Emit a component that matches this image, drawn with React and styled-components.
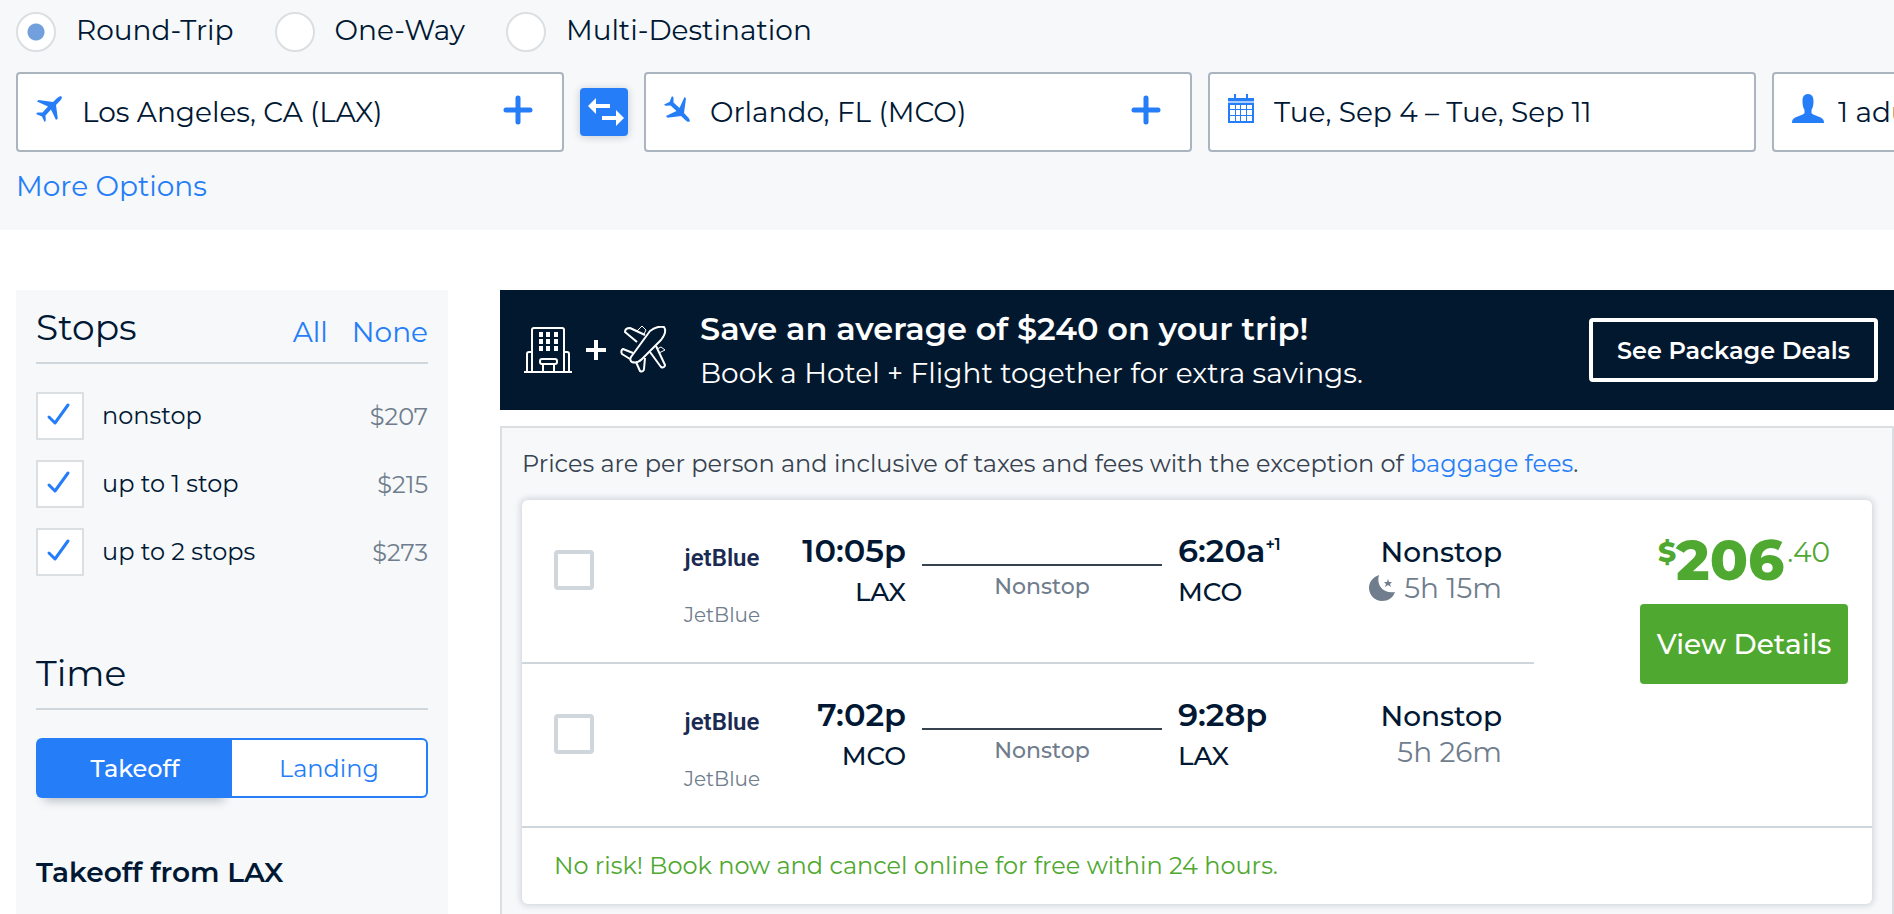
import React, { useState } from "react"
import styled, { createGlobalStyle, css } from "styled-components"

const navy = "#001833"
const blue = "#257ef8"
const green = "#4fa830"
const slate = "#6f7d8c"
const mist = "#f6f8fa"
const rule = "#cfd6dc"

const stops = [
  { id: "stops-0", label: "nonstop", price: "$207" },
  { id: "stops-1", label: "up to 1 stop", price: "$215" },
  { id: "stops-2", label: "up to 2 stops", price: "$273" },
]

const legs = [
  {
    id: "out",
    depart: "10:05p",
    from: "LAX",
    arrive: "6:20a",
    plus: "+1",
    to: "MCO",
    duration: "5h 15m",
    overnight: true,
  },
  {
    id: "back",
    depart: "7:02p",
    from: "MCO",
    arrive: "9:28p",
    to: "LAX",
    duration: "5h 26m",
  },
]

const Plane = ({ landing }) => (
  <PlaneSvg $landing={landing} viewBox="0 0 26 26" aria-hidden="true">
    <path
      fill="currentColor"
      d="M25.500.500c.8 1 0 2.500-1 3.700L20 9l1.800 13.500-1.800 1.500-5-10.500-5.500 6 .3 5-1.300 1.500L6 20.500 0 18l1.500-1.500h5l5.500-6L1 5.500 2.500 4 17 6l4.500-4.200C23 .5 24.700-.3 25.500.5z"
    />
  </PlaneSvg>
)

const Plus = () => (
  <PlusSvg viewBox="0 0 30 30" aria-hidden="true">
    <path d="M15 3v24M3 15h24" />
  </PlusSvg>
)

const Swap = () => (
  <svg width="36" height="30" viewBox="0 0 36 30" fill="#fff" aria-hidden="true">
    <path d="M0 9 8 1v6h14v4H8v6zM36 21l-8 8v-6H14v-4h14v-6z" />
  </svg>
)

const Calendar = () => (
  <svg width="26" height="30" viewBox="0 0 26 30" fill={blue} aria-hidden="true">
    <path d="M6 0h2v5H6zM18 0h2v5h-2zM0 4h26v3H0zM0 9h26v2H0z" />
    <path d="M0 7h26v2H0z" opacity=".4" />
    <path
      fillRule="evenodd"
      d="M0 10h26v19H0zM2 11v4h5v-4zM8 11v4h4v-4zM13 11v4h5v-4zM19 11v4h5v-4zM2 16v5h5v-5zM8 16v5h4v-5zM13 16v5h5v-5zM19 16v5h5v-5zM2 22v5h5v-5zM8 22v5h4v-5zM13 22v5h5v-5zM19 22v5h5v-5z"
    />
  </svg>
)

const Person = () => (
  <svg width="32" height="30" viewBox="0 0 32 30" fill={blue} aria-hidden="true">
    <path d="M16 0c4 0 5.500 3 5.500 7 0 4-.5 6-2 9v3c1 3 12.500 3 12.500 9v1H0v-1c0-6 11.500-6 12.500-9v-3c-1.500-3-2-5-2-9 0-4 1.500-7 5.500-7z" />
  </svg>
)

const Hotel = () => (
  <svg width="48" height="48" viewBox="0 0 48 48" fill="none" stroke="#fff" strokeWidth="2" aria-hidden="true">
    <path d="M0 46h48M8 46V4q0-2 2-2h28q2 0 2 2v42M3 46V28q0-2 2-2h3M45 46V28q0-2-2-2h-3M19 46v-8M30 46v-8" />
    <rect x="16" y="33" width="17" height="5" rx="2" />
    <path
      fill="#fff"
      stroke="none"
      d="M15 6h4v5h-4zM22 6h4v5h-4zM30 6h4v5h-4zM15 13h4v5h-4zM22 13h4v5h-4zM30 13h4v5h-4zM15 20h4v5h-4zM22 20h4v5h-4zM30 20h4v5h-4z"
    />
  </svg>
)

const Jet = () => (
  <svg width="48" height="48" viewBox="0 0 48 48" fill="none" stroke="#fff" strokeWidth="2" strokeLinejoin="round" aria-hidden="true">
    <path d="M11 31 30 5c4-3 10-5 14-4 2 3 1 8-3 13L22 33c-3 3-7 4-10 3-2-1-2-3-1-5z" />
    <path d="M25 9 10 2C7 2 5 3 5 6l12 10M36 20l9 19c0 2-2 3-4 2L30 26M13 27 3 23c-2 1-2 3-1 5l8 5M16 36l4 9c2 1 4 0 4-2l1-11" />
    <path strokeWidth="1" d="m17 5 5-5 4 4-2 4M39 27l6-3-4-3-4 2" />
  </svg>
)

const Moon = () => (
  <svg width="28" height="28" viewBox="0 0 28 28" fill={slate} aria-hidden="true">
    <path d="M11 1C8 11 15 20 27 18 25 24 20 27 14 27 7 27 1 21 1 14 1 8 5 3 11 1z" />
    <path d="m20 5 1 3h3l-2 2 1 3-3-2-3 2 1-3-2-2h3z" />
  </svg>
)

const Leg = ({ leg }) => (
  <LegRow>
    <Compare type="checkbox" aria-label={`Select flight ${leg.from} to ${leg.to}`} />
    <Airline>
      <Logo>jetBlue</Logo>
      <Carrier>JetBlue</Carrier>
    </Airline>
    <Depart>
      <Clock>{leg.depart}</Clock>
      <Airport>{leg.from}</Airport>
    </Depart>
    <Route>Nonstop</Route>
    <Arrive>
      <Clock>
        {leg.arrive}
        {leg.plus && <Sup>{leg.plus}</Sup>}
      </Clock>
      <Airport>{leg.to}</Airport>
    </Arrive>
    <Summary>
      <StopCount>Nonstop</StopCount>
      <Duration>
        {leg.overnight && <Moon />}
        {leg.duration}
      </Duration>
    </Summary>
  </LegRow>
)

const App = () => {
  const [trip, setTrip] = useState("Round-Trip")
  const [checked, setChecked] = useState(stops.map(s => s.id))
  const [time, setTime] = useState("Takeoff")

  const toggle = id =>
    setChecked(c => (c.includes(id) ? c.filter(x => x !== id) : [...c, id]))

  return (
    <Page>
      <GlobalStyle />
      <Search>
        <Trips>
          {["Round-Trip", "One-Way", "Multi-Destination"].map(t => (
            <TripLabel key={t}>
              <Radio name="trip" checked={trip === t} onChange={() => setTrip(t)} />
              {t}
            </TripLabel>
          ))}
        </Trips>
        <Fields>
          <Field>
            <Plane />
            <FieldInput aria-label="From" defaultValue="Los Angeles, CA (LAX)" />
            <AddButton aria-label="Add departure airport">
              <Plus />
            </AddButton>
          </Field>
          <SwapButton aria-label="Swap airports">
            <Swap />
          </SwapButton>
          <Field>
            <Plane landing />
            <FieldInput aria-label="To" defaultValue="Orlando, FL (MCO)" />
            <AddButton aria-label="Add arrival airport">
              <Plus />
            </AddButton>
          </Field>
          <Field>
            <Calendar />
            <FieldInput aria-label="Dates" defaultValue="Tue, Sep 4 – Tue, Sep 11" />
          </Field>
          <Field $tight>
            <Person />
            <FieldInput aria-label="Travelers" defaultValue="1 adult" />
          </Field>
        </Fields>
        <More href="#options">More Options</More>
      </Search>

      <Body>
        <Sidebar>
          <FilterHead>
            <FilterTitle>Stops</FilterTitle>
            <HeadActions>
              <TextButton onClick={() => setChecked(stops.map(s => s.id))}>All</TextButton>
              <TextButton onClick={() => setChecked([])}>None</TextButton>
            </HeadActions>
          </FilterHead>
          <StopList>
            {stops.map(s => (
              <StopItem key={s.id}>
                <Tick id={s.id} checked={checked.includes(s.id)} onChange={() => toggle(s.id)} />
                <StopLabel htmlFor={s.id}>{s.label}</StopLabel>
                <StopPrice>{s.price}</StopPrice>
              </StopItem>
            ))}
          </StopList>
          <FilterHead>
            <FilterTitle>Time</FilterTitle>
          </FilterHead>
          <Segments>
            {["Takeoff", "Landing"].map(t => (
              <Segment key={t} $active={time === t} onClick={() => setTime(t)}>
                {t}
              </Segment>
            ))}
          </Segments>
          <RangeTitle>Takeoff from LAX</RangeTitle>
          <RangeText>10:05am – 11:59pm</RangeText>
        </Sidebar>

        <Main>
          <Banner>
            <BannerIcons>
              <Hotel />
              <svg width="20" height="20" viewBox="0 0 20 20" fill="#fff" aria-hidden="true">
                <path d="M8 0h4v8h8v4h-8v8H8v-8H0V8h8z" />
              </svg>
              <Jet />
            </BannerIcons>
            <BannerText>
              <BannerTitle>Save an average of $240 on your trip!</BannerTitle>
              <BannerSub>Book a Hotel + Flight together for extra savings.</BannerSub>
            </BannerText>
            <DealsButton>See Package Deals</DealsButton>
          </Banner>

          <Results>
            <Notice>
              Prices are per person and inclusive of taxes and fees with the exception of{" "}
              <a href="#fees">baggage fees</a>.
            </Notice>
            <Card>
              <CardBody>
                <Legs>
                  {legs.map(leg => (
                    <Leg key={leg.id} leg={leg} />
                  ))}
                </Legs>
                <Fare>
                  <Price>
                    <Currency>$</Currency>
                    <Dollars>206</Dollars>
                    <Cents>.40</Cents>
                  </Price>
                  <DetailsButton>View Details</DetailsButton>
                </Fare>
              </CardBody>
              <Promise>No risk! Book now and cancel online for free within 24 hours.</Promise>
            </Card>
          </Results>
        </Main>
      </Body>
    </Page>
  )
}

const GlobalStyle = createGlobalStyle`
  * {
    box-sizing: border-box;
  }

  body {
    margin: 0;
    background: #fff;
    color: ${navy};
    font-family: Montserrat, Inter, sans-serif;
    font-size: 24px;
  }

  button, input {
    font: inherit;
    color: inherit;
    margin: 0;
    padding: 0;
    border: 0;
    background: none;
  }

  button {
    cursor: pointer;
  }

  a {
    color: ${blue};
    text-decoration: none;
  }

  svg {
    flex: none;
    display: block;
  }
`

const Page = styled.div`
  display: flex;
  flex-direction: column;
  height: 100vh;
  overflow: hidden;
`

const Search = styled.header`
  flex: none;
  padding: 12px 16px 24px;
  background: ${mist};
  font-size: 28px;
  overflow: hidden;
`

const Trips = styled.div`
  display: flex;
  gap: 41px;
  margin-bottom: 20px;
`

const TripLabel = styled.label`
  display: flex;
  gap: 20px;
  line-height: 36px;
`

const Radio = styled.input.attrs({ type: "radio" })`
  appearance: none;
  width: 40px;
  height: 40px;
  border: 2px solid #dcdfe2;
  border-radius: 50%;
  background: #fff;

  &:checked {
    background: radial-gradient(circle, #72a0dc 8px, #fff 9px);
  }
`

const Fields = styled.div`
  display: flex;
  align-items: center;
  gap: 16px;
`

const Field = styled.div`
  flex: 0 0 548px;
  display: flex;
  align-items: center;
  gap: ${p => (p.$tight ? 14 : 20)}px;
  height: 80px;
  padding: 0 29px 0 18px;
  background: #fff;
  border: 2px solid #abb5c0;
  border-radius: 4px;

  > svg {
    margin-bottom: 6px;
  }
`

const FieldInput = styled.input`
  flex: 1;
  min-width: 0;
  height: 40px;
  outline: 0;
`

const PlaneSvg = styled.svg`
  width: 26px;
  height: 26px;
  color: ${blue};
  transform: ${p => (p.$landing ? "rotate(90deg)" : "none")};
`

const AddButton = styled.button`
  margin-bottom: 4px;
`

const PlusSvg = styled.svg`
  width: 30px;
  height: 30px;
  fill: none;
  stroke: ${blue};
  stroke-width: 5;
  stroke-linecap: round;
`

const SwapButton = styled.button`
  flex: none;
  display: flex;
  align-items: center;
  justify-content: center;
  width: 48px;
  height: 48px;
  padding-left: 4px;
  background: ${blue};
  border-radius: 4px;
  box-shadow: 0 1px 8px rgba(0, 24, 51, 0.2);
`

const More = styled.a`
  display: inline-block;
  margin-top: 14px;
  line-height: 40px;
`

const Body = styled.div`
  flex: 1;
  min-height: 0;
  display: flex;
  gap: 52px;
  padding: 60px 0 0 16px;
`

const Sidebar = styled.aside`
  flex: 0 0 432px;
  padding: 16px 20px;
  background: ${mist};
  overflow: hidden;
`

const FilterHead = styled.div`
  display: flex;
  align-items: center;
  justify-content: space-between;
  height: 58px;
  padding-bottom: 14px;
  border-bottom: 2px solid ${rule};
`

const FilterTitle = styled.h2`
  margin: 0;
  font-size: 36px;
  font-weight: 400;
  line-height: 44px;
`

const HeadActions = styled.div`
  display: flex;
  gap: 24px;
  padding-top: 10px;
`

const TextButton = styled.button`
  color: ${blue};
  font-size: 28px;
  line-height: 36px;
`

const StopList = styled.ul`
  display: flex;
  flex-direction: column;
  gap: 20px;
  margin: 0;
  padding: 28px 0 76px;
  list-style: none;
`

const StopItem = styled.li`
  display: flex;
  align-items: center;
  gap: 18px;
`

const tickMark = `url("data:image/svg+xml,%3Csvg xmlns='http://www.w3.org/2000/svg' viewBox='0 0 44 44'%3E%3Cpath d='M11 23l6 6L30 11' fill='none' stroke='%23257ef8' stroke-width='3' stroke-linecap='round' stroke-linejoin='round'/%3E%3C/svg%3E")`

const Tick = styled.input.attrs({ type: "checkbox" })`
  appearance: none;
  width: 48px;
  height: 48px;
  border: 2px solid #dcdfe2;
  background-color: #fff;

  &:checked {
    background-image: ${tickMark};
  }
`

const StopLabel = styled.label`
  flex: 1;
  padding-bottom: 2px;
`

const StopPrice = styled.span`
  color: ${slate};
`

const Segments = styled.div`
  display: flex;
  height: 60px;
  margin: 28px 0 54px;
`

const Segment = styled.button`
  flex: 1 0 0;
  border: 2px solid ${blue};
  background: #fff;
  color: ${blue};

  &:first-child {
    border-right: 0;
    border-radius: 6px 0 0 6px;
  }

  &:last-child {
    border-left: 0;
    border-radius: 0 6px 6px 0;
  }

  ${p =>
    p.$active &&
    css`
      background: ${blue};
      color: #fff;
      font-weight: 500;
      box-shadow: 0 10px 10px -8px rgba(0, 24, 51, 0.3);
    `}
`

const RangeTitle = styled.h3`
  margin: 0 0 16px;
  font-size: 28px;
  font-weight: 600;
  line-height: 40px;
`

const RangeText = styled.p`
  margin: 0;
  color: ${slate};
  line-height: 32px;
`

const Main = styled.main`
  flex: 1;
  min-width: 0;
  display: flex;
  flex-direction: column;
  gap: 16px;
`

const Banner = styled.section`
  flex: none;
  display: flex;
  align-items: center;
  height: 120px;
  padding: 0 16px 0 24px;
  background: #02182f;
  color: #fff;
`

const BannerIcons = styled.div`
  display: flex;
  align-items: center;
  gap: 14px;
  margin-right: 32px;
`

const BannerText = styled.div`
  flex: 1;
  padding-top: 3px;
`

const BannerTitle = styled.h2`
  margin: 0;
  font-size: 32px;
  font-weight: 600;
  line-height: 44px;
`

const BannerSub = styled.p`
  margin: 0;
  font-size: 28px;
  font-weight: 400;
  line-height: 45px;
`

const DealsButton = styled.button`
  height: 64px;
  padding: 0 24px;
  border: 4px solid #fff;
  border-radius: 4px;
  font-weight: 600;
`

const Results = styled.section`
  flex: 1;
  padding: 16px 20px;
  background: ${mist};
  border: 2px solid #dcdfe2;
  border-bottom: 0;
`

const Notice = styled.p`
  margin: 0 0 16px;
  color: #36424f;
  line-height: 40px;
`

const Card = styled.article`
  background: #fff;
  border-radius: 6px;
  box-shadow: 0 0 6px 2px rgba(0, 24, 51, 0.14);
`

const CardBody = styled.div`
  display: flex;
  border-bottom: 2px solid ${rule};
`

const Legs = styled.div`
  flex: 1;
`

const LegRow = styled.div`
  display: flex;
  align-items: flex-start;
  box-sizing: content-box;
  height: 130px;
  padding: 32px 32px 0;

  &:not(:last-child) {
    border-bottom: 2px solid ${rule};
  }
`

const Compare = styled.input`
  appearance: none;
  flex: none;
  width: 40px;
  height: 40px;
  margin-top: 18px;
  border: 4px solid ${rule};
  border-radius: 4px;
  background: #fff;
`

const Airline = styled.div`
  width: 128px;
  margin: 8px 0 0 64px;
  text-align: center;
`

const Logo = styled.div`
  color: #1b2a52;
  font-family: Roboto, sans-serif;
  font-size: 24px;
  font-weight: 600;
  line-height: 36px;
`

const Carrier = styled.div`
  margin-top: 25px;
  color: ${slate};
  font-size: 20px;
  line-height: 28px;
`

const Depart = styled.div`
  width: 120px;
  text-align: right;
`

const Clock = styled.div`
  font-size: 32px;
  font-weight: 600;
  line-height: 38px;
`

const Sup = styled.sup`
  font-size: 16px;
  line-height: 16px;
`

const Airport = styled.div`
  font-size: 26px;
  font-weight: 500;
  line-height: 45px;
`

const Route = styled.div`
  flex: 1;
  margin: 32px 16px 0;
  padding-top: 4px;
  border-top: 2px solid #36424f;
  color: ${slate};
  font-size: 22px;
  font-weight: 500;
  line-height: 34px;
  text-align: center;
`

const Arrive = styled.div`
  width: 140px;
`

const Summary = styled.div`
  width: 184px;
  font-size: 28px;
  line-height: 36px;
  text-align: right;
`

const StopCount = styled.div`
  padding-top: 2px;
  font-weight: 500;
`

const Duration = styled.div`
  display: flex;
  align-items: center;
  justify-content: flex-end;
  gap: 8px;
  color: ${slate};
`

const Fare = styled.div`
  flex: 0 0 338px;
  display: flex;
  flex-direction: column;
  align-items: flex-end;
  padding: 28px 24px 0 0;
`

const Price = styled.div`
  display: flex;
  align-items: flex-start;
  justify-content: center;
  width: 208px;
  margin-bottom: 12px;
  color: ${green};
`

const Currency = styled.span`
  font-size: 28px;
  font-weight: 800;
  line-height: 48px;
`

const Dollars = styled.span`
  font-size: 56px;
  font-weight: 800;
  line-height: 64px;
`

const Cents = styled.span`
  padding-left: 3px;
  font-size: 28px;
  line-height: 48px;
`

const DetailsButton = styled.button`
  width: 208px;
  height: 80px;
  border-radius: 4px;
  background: ${green};
  color: #fff;
  font-size: 28px;
  font-weight: 500;
`

const Promise = styled.p`
  margin: 0;
  padding: 18px 32px;
  color: ${green};
  line-height: 40px;
`

export default App
